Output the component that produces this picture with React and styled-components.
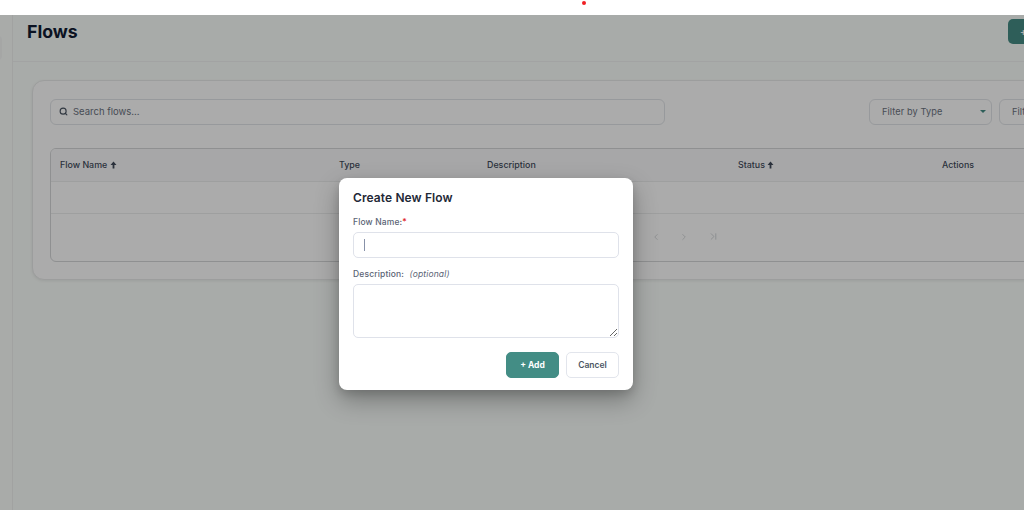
import React from "react";
import styled, { createGlobalStyle } from "styled-components";
import { Search, ChevronLeft, ChevronRight, ChevronLast } from "lucide-react";

const Global = createGlobalStyle`
  html, body { margin: 0; padding: 0; height: 100%; background: #fff; }
  body { font-family: Inter, "Liberation Sans", sans-serif; overflow: hidden; }
  * { box-sizing: border-box; }
`;

const Shell = styled.div`
  width: 1024px;
  height: 510px;
  display: flex;
  flex-direction: column;
  overflow: hidden;
`;
const TopBar = styled.div`
  height: 15px;
  flex: none;
  background: #fff;
  position: relative;
`;
const RedDot = styled.span`
  position: absolute;
  left: 582px;
  top: 1px;
  width: 4px;
  height: 4px;
  border-radius: 50%;
  background: #f01e23;
`;
const Stage = styled.div`
  flex: 1;
  position: relative;
  display: flex;
  background: #fbfffc;
  overflow: hidden;
`;
const Sidebar = styled.aside`
  width: 13px;
  flex: none;
  background: #fcfffd;
  border-right: 1px solid #f0f2f1;
  position: relative;
`;
const SideHandle = styled.span`
  position: absolute;
  left: -8px;
  top: 21px;
  width: 10px;
  height: 24px;
  border-radius: 4px;
  background: #f6f8f7;
`;
const Main = styled.main`
  width: 1200px;
  flex: none;
`;
const Header = styled.header`
  height: 47px;
  padding: 4px 0 0 14px;
  display: flex;
  justify-content: space-between;
  align-items: flex-start;
  border-bottom: 1px solid #f2f4f3;
`;
const Title = styled.h1`
  margin: 1px 0 0;
  font-size: 17.7px;
  line-height: 24px;
  font-weight: 700;
  color: #111c33;
`;
const NewButton = styled.button`
  width: 205px;
  height: 25px;
  border: 0;
  border-radius: 5px;
  background: #458d85;
  color: #fff;
  font: 600 10px Inter, sans-serif;
  text-align: left;
  padding-left: 12px;
`;
const Content = styled.div`
  padding: 18px 0 0 19px;
`;
const Card = styled.section`
  width: 1150px;
  height: 200px;
  background: #fff;
  border: 1px solid #e9ebea;
  border-radius: 12px;
  padding: 18px 17px;
  box-shadow: 0 1px 3px rgba(0, 0, 0, 0.08);
`;
const Toolbar = styled.div`
  display: flex;
  align-items: center;
  height: 26px;
`;
const SearchBox = styled.div`
  width: 615px;
  height: 26px;
  flex: none;
  display: flex;
  align-items: center;
  gap: 5px;
  padding: 0 0 1px 8px;
  border: 1px solid #e2e5e9;
  border-radius: 6px;
  background: #fff;
  font-size: 9.5px;
  color: #6b7280;
  margin-right: 204px;
`;
const FilterSelect = styled.div`
  width: 123px;
  height: 26px;
  flex: none;
  display: flex;
  align-items: center;
  justify-content: space-between;
  padding: 0 5px 1px 12px;
  margin-right: 7px;
  border: 1px solid #e2e5e9;
  border-radius: 6px;
  font-size: 9.2px;
  letter-spacing: 0.1px;
  color: #6b7280;
`;
const Caret = styled.span`
  width: 0;
  height: 0;
  border-left: 3px solid transparent;
  border-right: 3px solid transparent;
  border-top: 3px solid #458d85;
`;
const TableWrap = styled.div`
  margin-top: 23px;
  height: 114px;
  border: 1px solid #d5d7d9;
  border-radius: 6px;
  overflow: hidden;
`;
const Row = styled.div`
  display: grid;
  grid-template-columns: 288px 148px 251px 204px 200px;
  height: ${(p) => p.$h}px;
  padding-bottom: 1px;
  align-items: center;
  background: ${(p) => p.$bg || "#fff"};
  border-bottom: 1px solid #eceeed;
`;
const HeadCell = styled.div`
  display: flex;
  align-items: center;
  font-size: 8.9px;
  font-weight: 500;
  color: #414a5a;
  padding-left: 9px;
  white-space: pre;
  &:nth-child(n + 2) { padding-left: 0; }
`;
const Pager = styled.div`
  height: 45px;
  display: flex;
  align-items: center;
  gap: 18px;
  padding-left: 600px;
  color: #cfd2d5;
`;
const LastIcon = styled(ChevronLast)`
  margin-left: 1px;
`;
const Overlay = styled.div`
  position: absolute;
  inset: 0;
  background: rgba(0, 0, 0, 0.33);
  padding: 163px 0 0 339px;
`;
const Dialog = styled.div`
  width: 294px;
  height: 212px;
  background: #fff;
  border-radius: 8px;
  padding: 12px 14px;
  box-shadow: 0 10px 24px rgba(0, 0, 0, 0.3), 0 4px 8px rgba(0, 0, 0, 0.12);
`;
const DialogTitle = styled.h2`
  margin: 0;
  font-size: 12px;
  line-height: 15px;
  font-weight: 600;
  color: #1f2937;
  letter-spacing: 0.1px;
`;
const Label = styled.label`
  display: block;
  margin-top: ${(p) => p.$mt}px;
  font-size: 8.5px;
  line-height: 11px;
  font-weight: 500;
  color: #5b6475;
  letter-spacing: 0.15px;
`;
const Required = styled.span`
  color: #e02424;
`;
const Optional = styled.em`
  font-weight: 400;
  margin-left: 3px;
`;
const InputWrap = styled.div`
  position: relative;
  margin-top: 3.5px;
`;
const Input = styled.input`
  display: block;
  width: 266px;
  height: 26px;
  border: 1px solid #dfe2ea;
  border-radius: 5px;
  background: #fff;
  outline: none;
`;
const TextCursor = styled.span`
  position: absolute;
  left: 11px;
  top: 7px;
  width: 1px;
  height: 12px;
  background: #8791a8;
`;
const TextArea = styled.textarea`
  display: block;
  width: 266px;
  height: 54.5px;
  margin-top: 4px;
  border: 1px solid #dfe2ea;
  border-radius: 5px;
  background: #fff;
  outline: none;
  resize: both;
`;
const Actions = styled.div`
  display: flex;
  justify-content: flex-end;
  gap: 7px;
  margin-top: 14px;
`;
const ActionButton = styled.button`
  width: 53px;
  height: 25.5px;
  border-radius: 5px;
  border: 1px solid ${(p) => (p.$primary ? "#438d85" : "#e2e5ec")};
  background: ${(p) => (p.$primary ? "#438d85" : "#fff")};
  color: ${(p) => (p.$primary ? "#fff" : "#4b5563")};
  font: ${(p) => (p.$primary ? 700 : 600)} 8.5px Inter, sans-serif;
  padding: 0;
`;

const UpArrow = () => (
  <svg width="7" height="8" viewBox="0 0 7 8" aria-hidden="true">
    <path d="M3.5 0.5 L6.5 4 H4.4 V7.5 H2.6 V4 H0.5 Z" fill="currentColor" />
  </svg>
);

export default function App() {
  return (
    <Shell>
      <Global />
      <TopBar>
        <RedDot />
      </TopBar>
      <Stage>
        <Sidebar>
          <SideHandle />
        </Sidebar>
        <Main>
          <Header>
            <Title>Flows</Title>
            <NewButton>+ New Flow</NewButton>
          </Header>
          <Content>
            <Card>
              <Toolbar>
                <SearchBox>
                  <Search size={9} strokeWidth={3} color="#4b5563" />
                  Search flows...
                </SearchBox>
                <FilterSelect>
                  Filter by Type
                  <Caret />
                </FilterSelect>
                <FilterSelect>
                  Filter by Status
                  <Caret />
                </FilterSelect>
              </Toolbar>
              <TableWrap>
                <Row $h={33} $bg="#f9fafb">
                  <HeadCell>Flow Name <UpArrow /></HeadCell>
                  <HeadCell>Type</HeadCell>
                  <HeadCell>Description</HeadCell>
                  <HeadCell>Status <UpArrow /></HeadCell>
                  <HeadCell>Actions</HeadCell>
                </Row>
                <Row $h={32} />
                <Pager>
                  <ChevronLeft size={10} />
                  <ChevronRight size={10} />
                  <LastIcon size={11} />
                </Pager>
              </TableWrap>
            </Card>
          </Content>
        </Main>
        <Overlay>
          <Dialog>
            <DialogTitle>Create New Flow</DialogTitle>
            <Label $mt={12}>
              Flow Name:<Required>*</Required>
            </Label>
            <InputWrap>
              <Input aria-label="Flow Name" />
              <TextCursor />
            </InputWrap>
            <Label $mt={11}>
              Description: <Optional>(optional)</Optional>
            </Label>
            <TextArea aria-label="Description" />
            <Actions>
              <ActionButton $primary>+ Add</ActionButton>
              <ActionButton>Cancel</ActionButton>
            </Actions>
          </Dialog>
        </Overlay>
      </Stage>
    </Shell>
  );
}
